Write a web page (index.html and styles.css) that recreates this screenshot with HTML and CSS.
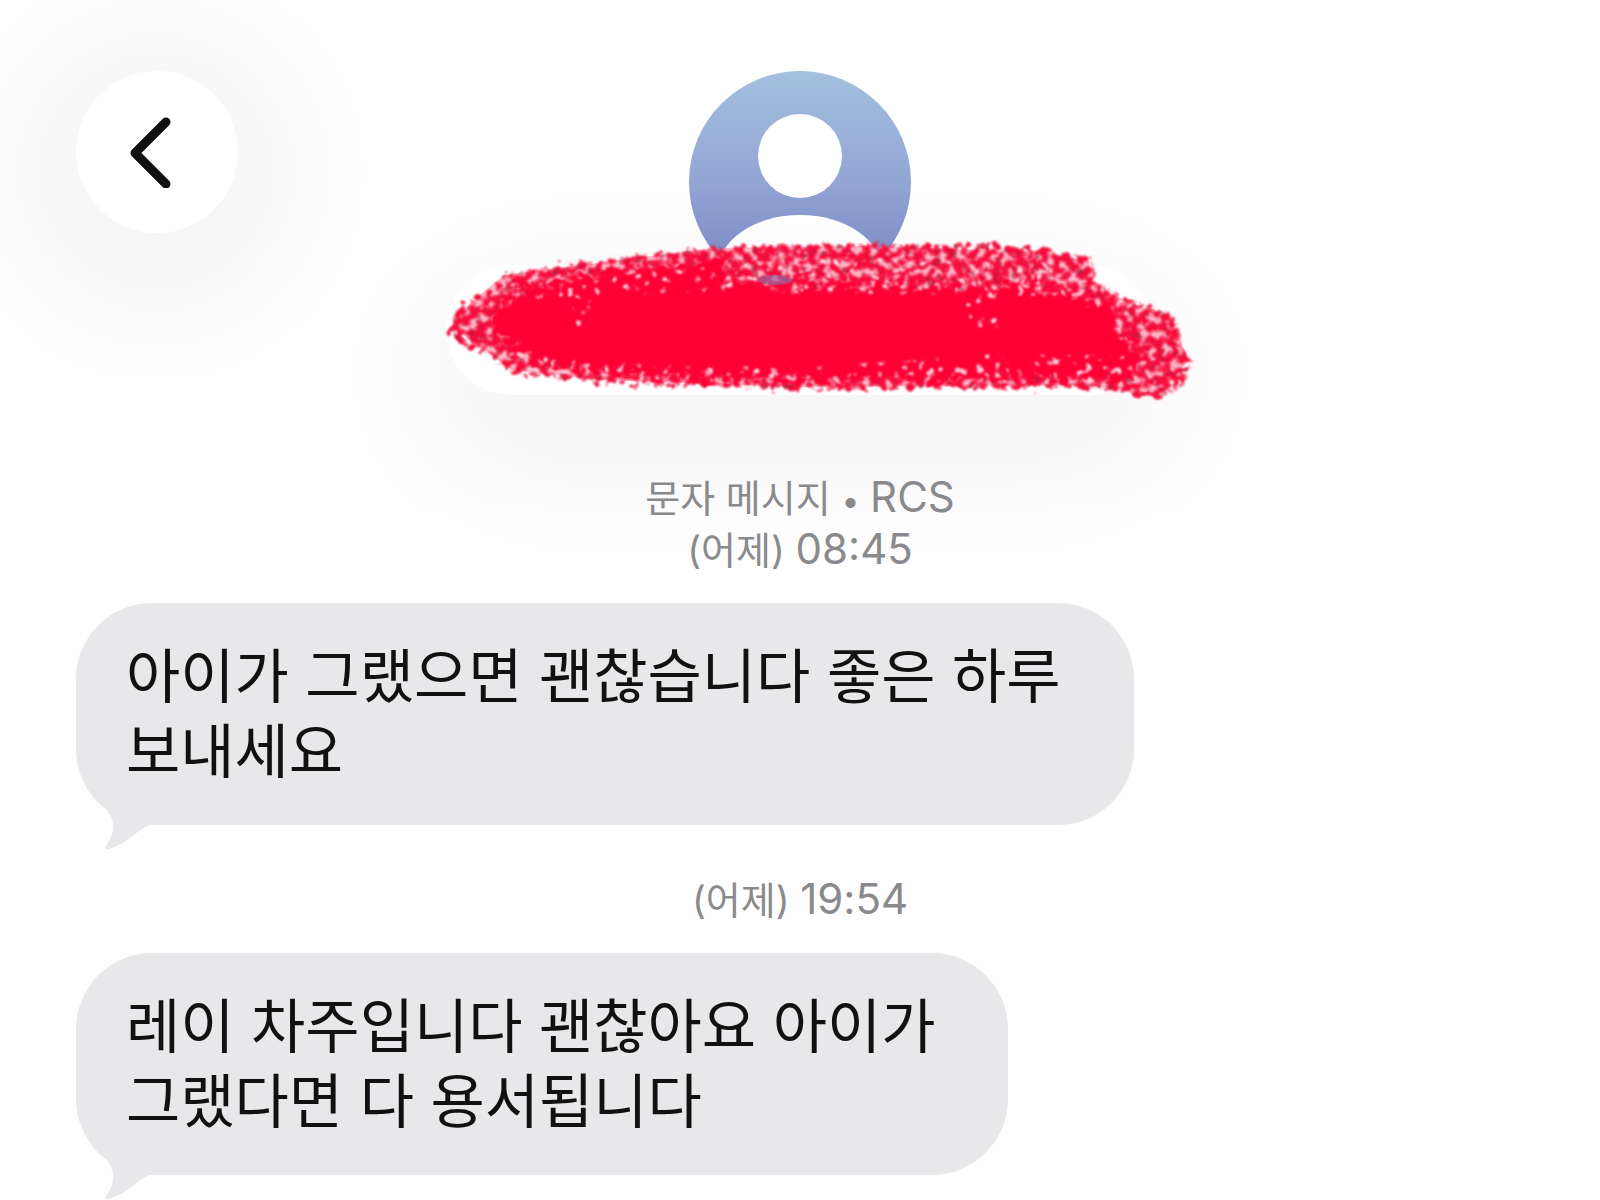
FILE: index.html
```html
<!DOCTYPE html>
<html lang="ko">
<head>
  <meta charset="UTF-8">
  <meta name="viewport" content="width=device-width, initial-scale=1.0">
  <title>문자 메시지</title>
  <link rel="stylesheet" href="styles.css">
</head>
<body>
  <header class="chat-header">
    <button class="back-button" type="button" aria-label="뒤로">
      <svg width="44" height="72" viewBox="0 0 44 72" aria-hidden="true">
        <path d="M37 6 L6 37 L37 68" fill="none" stroke="#111" stroke-width="9" stroke-linecap="round" stroke-linejoin="round"/>
      </svg>
    </button>

    <div class="contact">
      <svg class="avatar" viewBox="0 0 222 222" aria-hidden="true">
        <defs>
          <linearGradient id="avatarFill" x1="0" y1="0" x2="0" y2="1">
            <stop offset="0" stop-color="#a3c0e0"/>
            <stop offset="0.5" stop-color="#92a5d3"/>
            <stop offset="0.8" stop-color="#8391cb"/>
            <stop offset="1" stop-color="#7a80c4"/>
          </linearGradient>
        </defs>
        <circle cx="111" cy="111" r="111" fill="url(#avatarFill)"/>
        <circle cx="111" cy="85" r="42" fill="#fff"/>
        <ellipse cx="111" cy="200" rx="82" ry="56" fill="#fff"/>
      </svg>

      <div class="contact-name">
        <svg class="scribble" viewBox="399 235 800 170" aria-hidden="true">
          <defs>
            <filter id="chalk" x="-5%" y="-10%" width="110%" height="120%">
              <feTurbulence type="fractalNoise" baseFrequency="0.13" numOctaves="2" seed="7" result="noise"/>
              <feColorMatrix in="noise" values="0 0 0 0 0  0 0 0 0 0  0 0 0 0 0  6 0 0 0 -2.2" result="grain"/>
              <feDisplacementMap in="SourceGraphic" in2="noise" scale="18" xChannelSelector="R" yChannelSelector="G" result="rough"/>
              <feComposite in="rough" in2="grain" operator="in"/>
              <feGaussianBlur stdDeviation="1"/>
            </filter>
            <filter id="dark" x="-5%" y="-10%" width="110%" height="120%">
              <feTurbulence type="fractalNoise" baseFrequency="0.12" numOctaves="2" seed="21" result="noise"/>
              <feColorMatrix in="noise" values="0 0 0 0 0  0 0 0 0 0  0 0 0 0 0  8 0 0 0 -4.9" result="grain"/>
              <feComposite in="SourceGraphic" in2="grain" operator="in"/>
              <feGaussianBlur stdDeviation="1"/>
            </filter>
            <filter id="rough" x="-5%" y="-10%" width="110%" height="120%">
              <feTurbulence type="fractalNoise" baseFrequency="0.09" numOctaves="3" seed="3"/>
              <feDisplacementMap in="SourceGraphic" scale="34" xChannelSelector="R" yChannelSelector="G"/>
              <feGaussianBlur stdDeviation="1"/>
            </filter>
            <filter id="flecks" x="-5%" y="-10%" width="110%" height="120%">
              <feTurbulence type="fractalNoise" baseFrequency="0.12" numOctaves="2" seed="12" result="noise"/>
              <feColorMatrix in="noise" values="0 0 0 0 1  0 0 0 0 0.72  0 0 0 0 0.78  0 9 0 0 -5.6" result="grain"/>
              <feComposite in="grain" in2="SourceGraphic" operator="in"/>
              <feGaussianBlur stdDeviation="1"/>
            </filter>
            <path id="stroke" d="M503 275 L560 266 L640 256 L715 248 L770 245 L860 244 L980 245 L1040 249 L1090 260 L1097 284 L1130 300 L1175 317 L1180 345 L1192 360 L1182 384 L1160 397 L1120 391 L1080 387 L960 388 L800 389 L700 386 L600 382 L512 373 L495 356 L460 343 L446 328 L462 302 L495 292 Z"/>
          </defs>
          <use href="#stroke" fill="#ff5c7c" opacity="0.5" filter="url(#chalk)"/>
          <path d="M503 275 L715 248 L860 246 L1040 252 L1088 262 L1092 286 L1170 320 L1188 360 L1160 392 L1080 385 L800 387 L600 380 L512 370 L452 328 L470 302 Z" fill="#ff7c96" opacity="0.55"/>
          <use href="#stroke" fill="#f5103e" filter="url(#chalk)"/>
          <use href="#stroke" fill="#a02038" opacity="0.6" filter="url(#dark)"/>
          <path d="M497 306 L520 290 L560 280 L620 272 L680 266 L715 260 L736 280 L800 288 L900 287 L1020 286 L1080 297 L1118 313 L1112 334 L1134 350 L1146 368 L1126 381 L1060 378 L1000 380 L850 379 L700 378 L640 375 L560 367 L520 355 L492 335 Z" fill="#ff0036" filter="url(#rough)"/>
          <path d="M503 284 L700 268 L860 256 L1050 262 L1080 296 L700 292 L540 300 Z M500 350 L620 364 L800 368 L1000 354 L1130 356 L1170 380 L1140 386 L960 382 L700 382 L520 370 Z M570 300 L590 300 L600 330 L576 326 Z M956 290 L1000 292 L996 330 L966 324 Z" fill="#fff" filter="url(#flecks)"/>
          <path d="M503 272 C570 261 640 254 706 248" fill="none" stroke="#c8647c" stroke-width="3" opacity="0.6" filter="url(#flecks)"/>
          <ellipse cx="774" cy="280" rx="17" ry="5" fill="#96609c" opacity="0.7"/>
        </svg>
      </div>
    </div>
  </header>

  <main class="conversation">
    <p class="stamp">문자 메시지 <span class="dot">•</span> <span class="latin">RCS</span><br><time>(어제) <span class="latin">08:45</span></time></p>

    <div class="bubble">
      아이가 그랬으면 괜찮습니다 좋은 하루<br>보내세요
      <svg class="tail" viewBox="0 0 56 44" aria-hidden="true">
        <path d="M0 0 C14 14 10 28 2 39 C0 43 3 43 8 41 C28 34 34 20 52 16 L52 0 Z" fill="#e8e8ea"/>
      </svg>
    </div>

    <p class="stamp"><time>(어제) <span class="latin">19:54</span></time></p>

    <div class="bubble">
      레이 차주입니다 괜찮아요 아이가<br>그랬다면 다 용서됩니다
      <svg class="tail" viewBox="0 0 56 44" aria-hidden="true">
        <path d="M0 0 C14 14 10 28 2 39 C0 43 3 43 8 41 C28 34 34 20 52 16 L52 0 Z" fill="#e8e8ea"/>
      </svg>
    </div>
  </main>
</body>
</html>
```

FILE: styles.css
```css
* {
  margin: 0;
  padding: 0;
  box-sizing: border-box;
}

body {
  font-family: Inter, 'Noto Sans CJK KR', sans-serif;
  background: #fefefe;
  color: #111;
  min-height: 100vh;
  overflow: hidden;
}

.chat-header {
  display: grid;
  grid-template-columns: 1fr auto 1fr;
  align-items: start;
  padding: 71px 76px 0;
}

.back-button {
  display: flex;
  align-items: center;
  justify-content: center;
  width: 162px;
  height: 162px;
  padding-right: 12px;
  border: none;
  border-radius: 50%;
  background: #fff;
  box-shadow: 0 20px 140px 40px rgba(0, 0, 0, 0.05);
  cursor: pointer;
}

.contact {
  display: flex;
  flex-direction: column;
  align-items: center;
}

.avatar {
  position: relative;
  width: 222px;
  height: 222px;
}

.contact-name {
  position: relative;
  width: 708px;
  height: 130px;
  margin-top: -28px;
  border-radius: 65px;
  background: #fff;
  box-shadow: 0 44px 150px 10px rgba(0, 0, 0, 0.05);
}

/* marker stroke over the name */
.scribble {
  position: absolute;
  top: -30px;
  left: 50%;
  width: 800px;
  height: 170px;
  transform: translateX(-50%);
}

.conversation {
  display: flex;
  flex-direction: column;
  align-items: flex-start;
  padding: 77px 76px 0;
}

.stamp {
  position: relative;
  align-self: center;
  color: #8a8a8c;
  font-size: 38px;
  line-height: 52px;
  text-align: center;
}

.latin {
  font-size: 42px;
  line-height: 1;
}

.dot {
  font-size: 32px;
  line-height: 1;
}

.bubble {
  position: relative;
  margin: 27px 0 49px;
  padding: 32px 73px 40px 50px;
  border-radius: 76px;
  background: #e8e8ea;
  font-family: 'Noto Sans CJK KR', sans-serif;
  font-size: 59px;
  line-height: 75px;
}

.tail {
  position: absolute;
  bottom: -26px;
  left: 28px;
  width: 56px;
  height: 44px;
}
```
